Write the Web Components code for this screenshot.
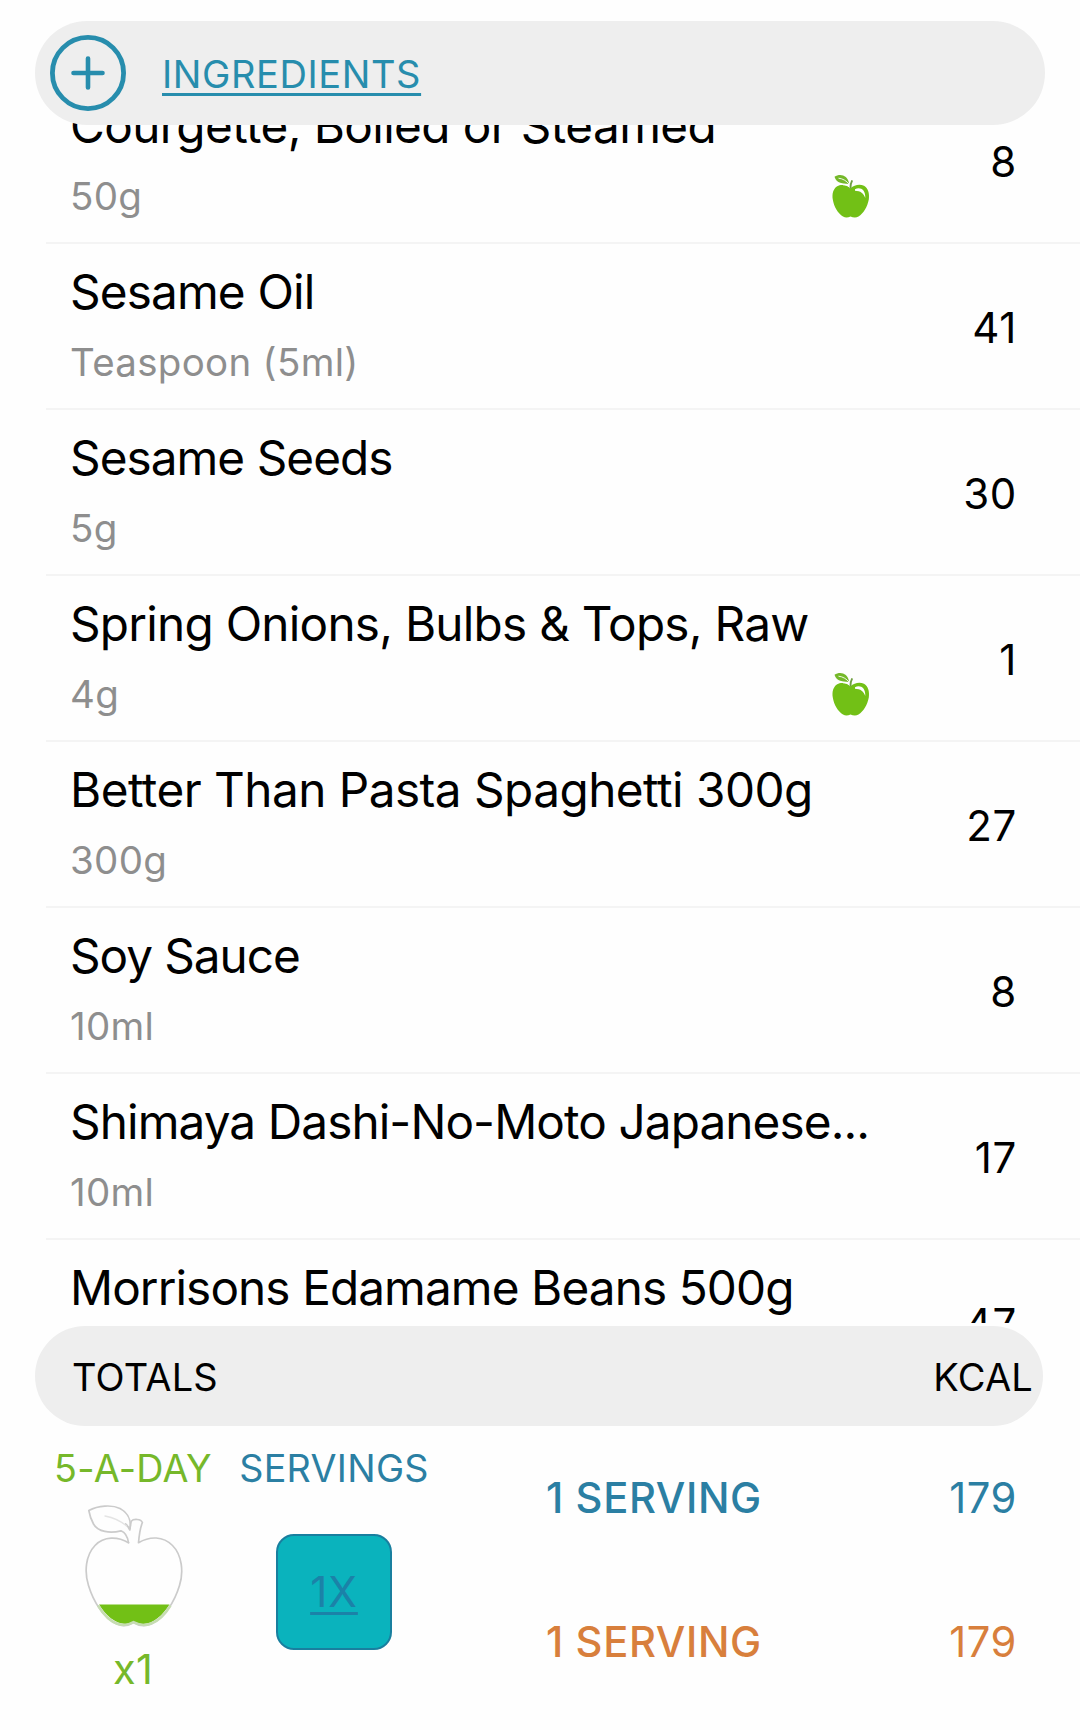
<!DOCTYPE html>
<html lang="en">
<head>
<meta charset="utf-8">
<title>Ingredients</title>
<style>
    body {
        margin: 0;
        width: 1080px;
        height: 1730px;
        overflow: hidden;
        background: #fefefe;
        color: #000;
        font-family: Inter, "Liberation Sans", sans-serif;
    }
</style>
</head>
<body>
<food-diary></food-diary>

<script>
const define = (name, html, setup) => {
    const template = document.createElement('template');
    template.innerHTML = html;

    customElements.define(name, class extends HTMLElement {
        constructor() {
            super();
            this.root = this.attachShadow({ mode: 'open' });
            this.root.appendChild(template.content.cloneNode(true));
        }

        connectedCallback() {
            if (setup) setup(this, this.root);
        }
    });
};

define('apple-icon', `
<style>
    :host { display: block; width: 38px; height: 44px; }
    svg { display: block; }
</style>
<svg width="38" height="44" viewBox="0 0 38 44">
    <path fill="#72c016" d="M18.5 14.2C15 10.8 9 9.8 5.2 12.3C1 15 0 20 .8 25.5C1.8 32.5 6 39.5 11 42.5C13.5 43.9 16 43.6 18.5 42.4C21 43.6 24 44 26.5 42.5C31.5 39.5 35.5 32.5 36.8 25.5C37.8 19.5 36 13.8 32 11.7C27.5 9.5 22 11 18.5 14.2Z"/>
    <path fill="#74b829" d="M2.500 2.800C8 -.6 15.500 .8 17.200 10C11 9.800 4.500 9.500 2.500 2.800Z"/>
    <path fill="none" stroke="#fff" stroke-width=".9" d="M6.500 4.200C11 4.600 14.500 7 17 10"/>
    <path fill="none" stroke="#fff" stroke-width="1.4" d="M11 10.600Q16 10 18.400 13.800"/>
    <path fill="none" stroke="#6f9f40" stroke-width="1.900" d="M18.400 14.500Q18.200 10 20.200 6.400"/>
    <path fill="#fff" d="M23 15.300C27.500 12.600 33.800 15 33.300 24C31.800 19.600 28.500 16.800 23 16.800Z"/>
</svg>
`);

define('apple-gauge', `
<style>
    :host { display: block; width: 100px; height: 124px; }
    svg { display: block; }
</style>
<svg width="100" height="124" viewBox="0 0 100 124">
    <path fill="#72c016" d="M14 100.500H84.500C78 111 68 120.500 57 120C53.500 119.800 51.500 118 49 118C46.500 118 44.500 119.800 41 120C30 120 20.500 111 14 100.500Z"/>
    <g fill="none" stroke="#cbcbcb" stroke-width="1.700" stroke-linejoin="round" stroke-linecap="round">
        <path d="M43.500 38.700C33 32.500 19 31.800 10 41.500C.5 51.500-.8 68 3.500 81.500C8.500 98 19 114.500 31.500 120C38 122.700 44 121.500 48.500 118.800C53 121.500 60 122.700 66.500 120C79 114.500 89.500 98 94.500 81.500C98.800 68 97 51 87.500 41.500C78 32 65 32 53.500 38.700C54.200 30.500 55 24.500 57.400 18.500C56 14.800 48.500 14.600 46.200 17.200L45 24.500"/>
        <path d="M43.500 38.700C42.500 32 40.500 28.500 36 26.800C25 29.500 13 28 8.500 20C6 15.500 4.500 10.500 3.800 6.500C13 1.500 27 .5 35 4.500C44 9.500 46.500 16 44.800 26C44 23.500 43 22 40.500 20"/>
        <path stroke="#e4e4e4" stroke-width="1.300" d="M20 12Q33 14.500 41.500 22"/>
    </g>
    <path fill="none" stroke="#c6dcb2" stroke-width="2.500" d="M13 101.500C18.500 110.500 25.500 117.500 32.500 119.800C39 122 44.500 120.500 48.500 118.200C53 120.500 59 122 65.500 119.800C72.500 117.500 80 110.500 85.500 101.500"/>
</svg>
`);

define('pill-bar', `
<style>
    :host {
        display: flex;
        align-items: center;
        box-sizing: border-box;
        flex: none;
        background: #eee;
        border-radius: 52px;
    }
</style>
<slot></slot>
`);

define('add-button', `
<style>
    :host { display: block; width: 76px; height: 76px; }
    svg { display: block; }
</style>
<svg width="76" height="76" viewBox="0 0 76 76" fill="none" stroke="#278dad">
    <circle cx="38" cy="38" r="35.600" stroke-width="4.800"/>
    <path stroke-width="4.600" stroke-linecap="round" d="M38 23.500V52.500M23.500 38H52.500"/>
</svg>
`);

define('ingredient-row', `
<style>
    :host {
        display: flex;
        align-items: center;
        box-sizing: border-box;
        height: 166px;
        padding: 0 63px 0 24px;
        border-bottom: 2px solid #f4f4f4;
    }
    .body {
        width: 800px;
        align-self: flex-start;
        padding-top: 19px;
        white-space: nowrap;
    }
    .name {
        font-size: 47.7px;
        line-height: 58px;
    }
    .detail {
        display: flex;
        justify-content: space-between;
        align-items: center;
        margin-top: 17px;
        height: 48px;
        color: #8e8e8e;
        font-size: 38.5px;
        line-height: 48px;
        letter-spacing: .3px;
    }
    .kcal {
        margin-left: auto;
        font-size: 42px;
        line-height: 50px;
        letter-spacing: .7px;
        padding-top: 4px;
    }
</style>
<div class="body">
    <div class="name"><slot></slot></div>
    <div class="detail"><span class="amount"></span></div>
</div>
<div class="kcal"></div>
`, (el, root) => {
    // track: letter spacing of the name, in px
    root.querySelector('.name').style.letterSpacing = el.getAttribute('track') + 'px';
    root.querySelector('.amount').textContent = el.getAttribute('amount');
    root.querySelector('.kcal').textContent = el.getAttribute('kcal');
    if (el.hasAttribute('fruit')) {
        root.querySelector('.detail').appendChild(document.createElement('apple-icon'));
    }
});

define('serving-line', `
<style>
    :host {
        display: flex;
        justify-content: space-between;
        font-size: 41.7px;
        line-height: 50px;
        letter-spacing: .6px;
    }
    b { font-weight: 500; }
</style>
<b><slot></slot></b><span></span>
`, (el, root) => {
    root.querySelector('span').textContent = el.getAttribute('kcal');
});

define('totals-panel', `
<style>
    :host { display: flex; color: #2b7fa3; white-space: nowrap; }
    .col {
        display: flex;
        flex-direction: column;
        align-items: center;
        font-size: 37.7px;
        line-height: 46px;
        letter-spacing: .3px;
        padding-top: 19px;
    }
    .day { width: 156px; margin-left: 55px; color: #76b82a; }
    .day apple-gauge { margin: 13px 0 0 3px; }
    .count { font-size: 41.5px; line-height: 50px; margin-top: 16px; }
    .servings { width: 190px; margin-left: 28px; }
    .multiplier {
        display: flex;
        align-items: center;
        justify-content: center;
        box-sizing: border-box;
        width: 116px;
        height: 116px;
        margin-top: 43px;
        border: 2px solid #197f9f;
        border-radius: 18px;
        background: #0ab3bd;
        color: #1b82a8;
        font-size: 42px;
        letter-spacing: 1px;
    }
    .multiplier span {
        text-decoration: underline;
        text-decoration-thickness: 3px;
        text-underline-offset: 5px;
        text-decoration-skip-ink: none;
    }
    .lines { flex: 1; margin-left: 117px; padding: 47px 63px 0 0; }
    serving-line + serving-line { margin-top: 94px; color: #d87f3c; }
</style>
<div class="col day">
    <div>5-A-DAY</div>
    <apple-gauge></apple-gauge>
    <div class="count">x1</div>
</div>
<div class="col servings">
    <div>SERVINGS</div>
    <div class="multiplier"><span>1X</span></div>
</div>
<div class="lines">
    <serving-line kcal="179">1 SERVING</serving-line>
    <serving-line kcal="179">1 SERVING</serving-line>
</div>
`);

define('food-diary', `
<style>
    :host { display: flex; flex-direction: column; height: 1730px; }
    .top {
        position: relative;
        z-index: 1;
        height: 104px;
        margin: 21px 35px 0;
        padding-left: 15px;
        color: #278dad;
        font-size: 38px;
    }
    .top a {
        margin-left: 36px;
        padding-top: 1px;
        letter-spacing: .6px;
        text-decoration: underline;
        text-decoration-thickness: 3px;
        text-underline-offset: 5px;
    }
    .list { flex: none; height: 1200px; margin-top: -2px; overflow: hidden; }
    .rows { margin: -45px 0 0 46px; }
    .totals {
        height: 100px;
        margin: 3px 37px 0 35px;
        padding: 1px 10px 0 37px;
        justify-content: space-between;
        font-size: 38px;
        letter-spacing: .2px;
    }
</style>
<pill-bar class="top"><add-button></add-button><a>INGREDIENTS</a></pill-bar>
<div class="list">
    <div class="rows">
        <ingredient-row amount="50g" kcal="8" track="-.61" fruit>Courgette, Boiled or Steamed</ingredient-row>
        <ingredient-row amount="Teaspoon (5ml)" kcal="41" track="-.85">Sesame Oil</ingredient-row>
        <ingredient-row amount="5g" kcal="30" track="-.95">Sesame Seeds</ingredient-row>
        <ingredient-row amount="4g" kcal="1" track="-.75" fruit>Spring Onions, Bulbs &amp; Tops, Raw</ingredient-row>
        <ingredient-row amount="300g" kcal="27" track="-.53">Better Than Pasta Spaghetti 300g</ingredient-row>
        <ingredient-row amount="10ml" kcal="8" track="-1.05">Soy Sauce</ingredient-row>
        <ingredient-row amount="10ml" kcal="17" track="-.9">Shimaya Dashi-No-Moto Japanese...</ingredient-row>
        <ingredient-row amount="" kcal="47" track="-.9">Morrisons Edamame Beans 500g</ingredient-row>
    </div>
</div>
<pill-bar class="totals"><span>TOTALS</span><span>KCAL</span></pill-bar>
<totals-panel></totals-panel>
`);
</script>
</body>
</html>
